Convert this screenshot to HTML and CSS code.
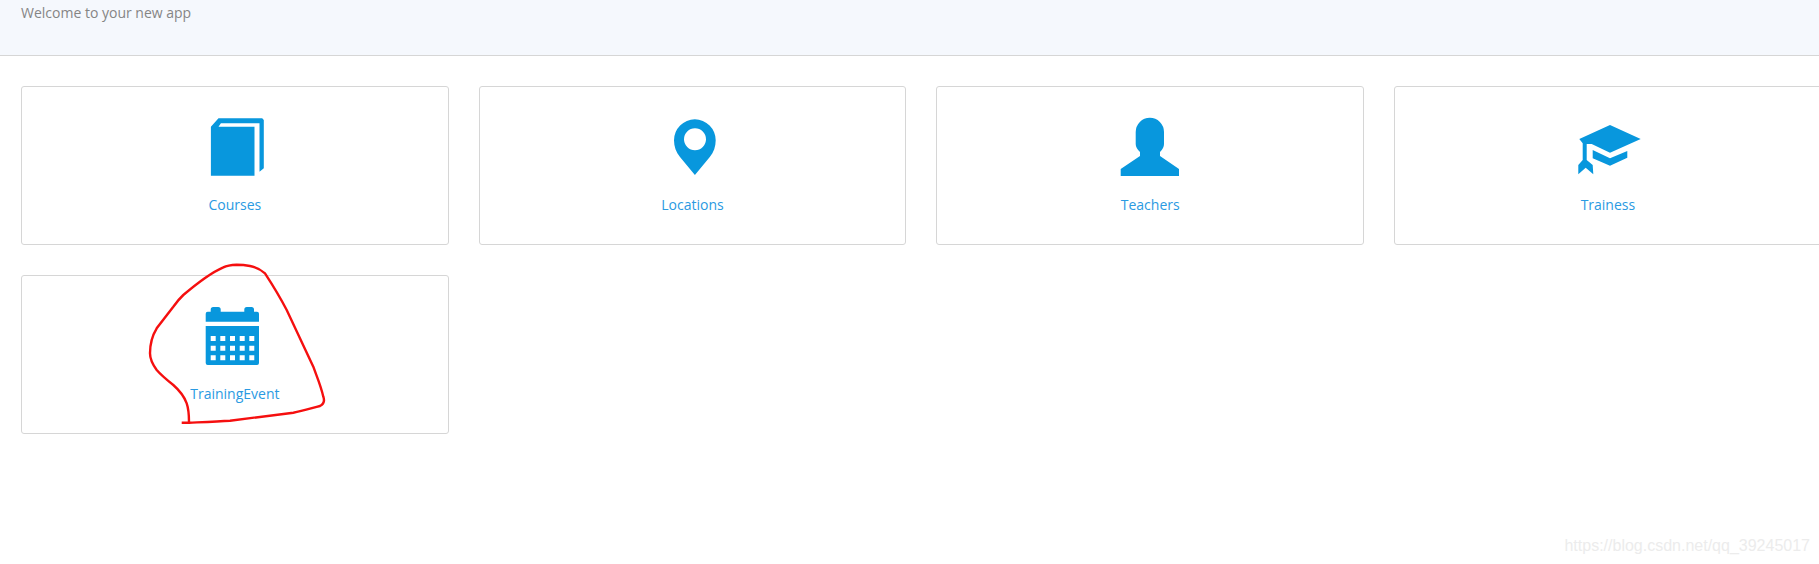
FILE: index.html
```html
<!DOCTYPE html>
<html lang="en">
  <head>
    <meta charset="UTF-8" />
    <meta name="viewport" content="width=device-width, initial-scale=1.0" />
    <title>Home</title>
    <link rel="stylesheet" href="styles.css">
  </head>
  <body>
    <header class="page-header">
      <p class="welcome">Welcome to your new app</p>
    </header>

    <main class="tile-grid">
      <a class="tile" href="#">
        <svg class="tile-icon" viewBox="0 0 60 60">
          <path d="M5.9 10.7 13.500 2.3H57.200L58.800 4V52.300L54.500 55.700V7.300H15.900L13.500 10.700H49.500V59.700H5.900Z" />
        </svg>
        <span class="tile-label">Courses</span>
      </a>
      <a class="tile" href="#">
        <svg class="tile-icon" viewBox="0 0 60 60">
          <path fill-rule="evenodd" d="M31.9 59 17 41C13 36 11 30.5 11 24.2A20.85 20.85 0 0 1 52.7 24.2C52.7 30.5 50.8 36 46.8 41ZM32 12.3A11 11 0 1 0 32 34.3 11 11 0 1 0 32 12.3Z" />
        </svg>
        <span class="tile-label">Locations</span>
      </a>
      <a class="tile" href="#">
        <svg class="tile-icon" viewBox="0 0 60 60">
          <path d="M15.7 16A14.15 14.3 0 0 1 44 16V28Q44 32 40 36V40L59 53V60H.7V53L20 40V36Q15.7 32 15.7 28Z" />
        </svg>
        <span class="tile-label">Teachers</span>
      </a>
      <a class="tile" href="#">
        <svg class="tile-icon" viewBox="0 0 60 60">
          <path d="M32 9 62.700 23 32 36.700 13.700 28H8.700V44L14.700 49 15.300 58.300 7.700 51.700 .3 58.300V49L4.700 44V27.300L1.300 23Z" />
          <path d="M14.700 34 32 42.300 49.300 35V41.700L32 49.700 14.700 42.300Z" />
        </svg>
        <span class="tile-label">Trainess</span>
      </a>
      <a class="tile" href="#">
        <svg class="tile-icon" viewBox="0 0 60 60">
          <path d="M.7 8.7Q.7 6.7 2.7 6.7H5.7V4.5Q5.7 2 8.2 2H13.2Q15.7 2 15.7 4.5V6.7H39.3V4.5Q39.3 2 41.8 2H46.5Q49 2 49 4.5V6.7H52Q54 6.7 54 8.7V16.7H.7Z" />
          <path fill-rule="evenodd" d="M.7 21H54V58Q54 60 52 60H2.7Q.7 60 .7 58ZM5.7 31h5v5h-5zM15.3 31h5v5h-5zM25 31h5v5h-5zM34.7 31h5v5h-5zM44.3 31h5v5h-5zM5.7 40.7h5v5h-5zM15.3 40.7h5v5h-5zM25 40.7h5v5h-5zM34.7 40.7h5v5h-5zM44.3 40.7h5v5h-5zM5.7 50.3h5v5h-5zM15.3 50.3h5v5h-5zM25 50.3h5v5h-5zM34.7 50.3h5v5h-5zM44.3 50.3h5v5h-5z" />
        </svg>
        <span class="tile-label">TrainingEvent</span>
      </a>
    </main>

    <!-- red pen mark drawn over the screenshot -->
    <svg class="pen-mark" viewBox="0 0 1819 564">
      <path d="M181.7 422.7H189C205 422 218 421.5 230 420.7L293.3 412.7C303 411 312 408 320 406C324 404 324.5 400 323.3 396.7C321 386 317 377 313.3 366.7L286.7 310C280 297 272 284 265 273.3C260 269 255 267 250 266C245 265 241 264.7 236.7 264.7C231 265 227 265.5 223.3 267.3C208 274 195 285 183.3 295C179 299 176 303 173.3 306.7L156.7 328.3C152 336 150 345 150 353.3C150 360 153 365 156.7 370C161 375 167 380 173.3 385C179 390 184 396 186.7 403.3C189 410 189 416 189 422" />
    </svg>

    <span class="watermark">https://blog.csdn.net/qq_39245017</span>
  </body>
</html>
```

FILE: styles.css
```css
* {
  margin: 0;
  padding: 0;
  box-sizing: border-box;
  font-family: "Open Sans", Arial, sans-serif;
}

html,
body {
  height: 100%;
  overflow: hidden;
}

body {
  background-color: white;
  position: relative;
}

.page-header {
  height: 56px;
  padding: 3px 21px 0;
  background-color: #f5f8fd;
  border-bottom: 1px solid #d6d6d6;
}

.welcome {
  font-size: 14px;
  line-height: 20px;
  color: #858585;
}

.tile-grid {
  display: grid;
  grid-template-columns: repeat(4, 427.7px);
  column-gap: 30px;
  row-gap: 30px;
  padding: 30px 21px;
}

.tile {
  height: 159px;
  padding-top: 29px;
  display: flex;
  flex-direction: column;
  align-items: center;
  background-color: white;
  border: 1px solid #d6d6d6;
  border-radius: 3px;
  text-decoration: none;
}

.tile-icon {
  display: block;
  width: 60px;
  height: 60px;
  overflow: visible;
  fill: #0897dd;
}

.tile-label {
  margin-top: 19px;
  font-size: 14px;
  line-height: 20px;
  color: #2a9ae2;
}

.pen-mark {
  position: absolute;
  top: 0;
  left: 0;
  width: 1819px;
  height: 564px;
  fill: none;
  stroke: #f50f0f;
  stroke-width: 2.4;
  pointer-events: none;
}

.watermark {
  position: absolute;
  right: 9px;
  top: 536px;
  font-family: "Liberation Sans", Arial, sans-serif;
  font-size: 16px;
  line-height: 20px;
  color: #ececec;
}
```
